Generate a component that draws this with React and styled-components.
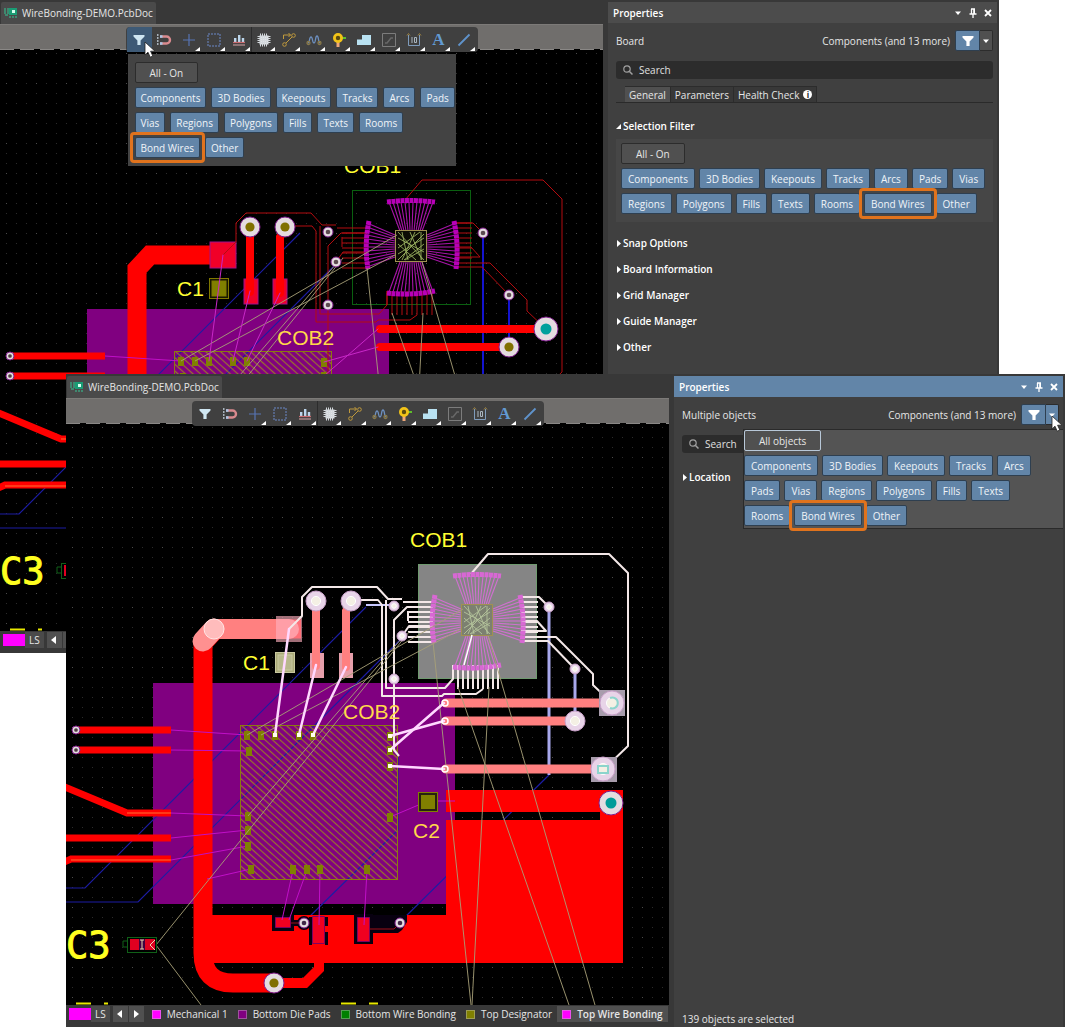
import styled, { createGlobalStyle, css } from 'styled-components';

const BLUE = '#6285a8';

/* ---------- data ---------- */

const toolbarFilters = [
  ['Components', '3D Bodies', 'Keepouts', 'Tracks', 'Arcs', 'Pads'],
  ['Vias', 'Regions', 'Polygons', 'Fills', 'Texts', 'Rooms'],
  ['Bond Wires', 'Other'],
];

const panelFilters = [
  ['Components', '3D Bodies', 'Keepouts', 'Tracks', 'Arcs', 'Pads', 'Vias'],
  ['Regions', 'Polygons', 'Fills', 'Texts', 'Rooms', 'Bond Wires', 'Other'],
];

const objectFilters = [
  ['Components', '3D Bodies', 'Keepouts', 'Tracks', 'Arcs'],
  ['Pads', 'Vias', 'Regions', 'Polygons', 'Fills', 'Texts'],
  ['Rooms', 'Bond Wires', 'Other'],
];

const sections = [
  'Snap Options',
  'Board Information',
  'Grid Manager',
  'Guide Manager',
  'Other',
];

const layers = [
  { name: 'Mechanical 1', color: '#ff00ff' },
  { name: 'Bottom Die Pads', color: '#800080' },
  { name: 'Bottom Wire Bonding', color: '#008000' },
  { name: 'Top Designator', color: '#808000' },
  { name: 'Top Wire Bonding', color: '#ff00ff', active: true },
];

/* ---------- icons ---------- */

const FunnelIcon = ({ color = '#cfe6f2' }) => (
  <svg width="16" height="16" viewBox="0 0 16 16" aria-hidden="true">
    <path d="M2.500 3h11v1.600L9.600 8.600V13H6.400V8.600L2.500 4.600z" fill={color} />
  </svg>
);

const PcbIcon = () => (
  <svg width="14" height="12" viewBox="0 0 14 12" aria-hidden="true">
    <path d="M5 1h8v7H5z" fill="#1a9c74" />
    <path d="M8 3h3v3H8z" fill="#d8fff0" />
    <path
      d="M0 2h2M3 2h2M0 4h2M3 4h2M0 6h2M3 6h2M1 8h3M5 10h2M8 10h2M11 10h2"
      stroke="#35c795"
      strokeWidth="1.2"
    />
  </svg>
);

const tools = [
  { name: 'Selection filter', icon: <FunnelIcon /> },
  {
    name: 'Snapping',
    icon: (
      <svg width="16" height="16" viewBox="0 0 16 16">
        <path d="M4 4.500h6.500a3.500 3.500 0 0 1 0 7H4" fill="none" stroke="#d98a8e" strokeWidth="2.400" />
        <path d="M4 4.500h2.500M4 11.500h2.500" stroke="#a9c6e6" strokeWidth="2.400" />
        <path d="M1 3h1.500M1 6h1.500M1 9h1.500M1 12h1.500" stroke="#c9d6e2" strokeWidth="1.500" />
      </svg>
    ),
  },
  {
    name: 'Place origin',
    menu: true,
    icon: (
      <svg width="16" height="16" viewBox="0 0 16 16">
        <path d="M8 2v12M2 8h12" stroke="#5774b4" strokeWidth="1.200" />
      </svg>
    ),
  },
  {
    name: 'Select area',
    menu: true,
    icon: (
      <svg width="16" height="16" viewBox="0 0 16 16">
        <rect x="2" y="2" width="12" height="12" fill="none" stroke="#6a88c8" strokeDasharray="2 1" />
      </svg>
    ),
  },
  {
    name: 'Align',
    menu: true,
    divider: true,
    icon: (
      <svg width="16" height="16" viewBox="0 0 16 16">
        <path d="M3 6h2.400v5H3zM7 3h2.400v8H7zM10.800 6h2.400v5h-2.400z" fill="#bcd6ec" />
        <path d="M2 10.500h12" stroke="#c96a6e" strokeWidth="1.200" />
        <path d="M2 13h12" stroke="#d8a5a8" />
      </svg>
    ),
  },
  {
    name: 'Place component',
    menu: true,
    icon: (
      <svg width="16" height="16" viewBox="0 0 16 16">
        <path d="M3.500 3.500h9v9h-9z" fill="#dfe3e6" />
        <path
          d="M4.500 1.500v13M6.500 1.500v13M8.500 1.500v13M10.500 1.500v13M1.500 4.500h13M1.500 6.500h13M1.500 8.500h13M1.500 10.500h13"
          stroke="#d3d8dc"
        />
      </svg>
    ),
  },
  {
    name: 'Route track',
    menu: true,
    icon: (
      <svg width="16" height="16" viewBox="0 0 16 16" fill="none" stroke="#c09a3c">
        <path d="M2.500 7V3h7M7.500 1l2 2-2 2M5 11l6-6" />
        <circle cx="3.500" cy="12.500" r="1.800" />
        <circle cx="12.500" cy="3.500" r="1.800" />
      </svg>
    ),
  },
  {
    name: 'Tune length',
    menu: true,
    icon: (
      <svg width="16" height="16" viewBox="0 0 16 16" fill="none" strokeWidth="1.300">
        <path d="M2 11c2 0 1-6 3-6s1 6 3 6 1-7 3-7 1 7 3 7" stroke="#6d90c0" />
        <circle cx="2.500" cy="11" r="1.500" stroke="#8a7a4a" />
        <circle cx="13.500" cy="11" r="1.500" stroke="#8a7a4a" />
      </svg>
    ),
  },
  {
    name: 'Place via',
    menu: true,
    icon: (
      <svg width="16" height="16" viewBox="0 0 16 16">
        <path d="M10 6h5" stroke="#5fbf2a" strokeWidth="2" />
        <path d="M7 9v6" stroke="#f0a878" strokeWidth="3" />
        <circle cx="7" cy="6" r="3.600" fill="#5a4a10" stroke="#f2c318" strokeWidth="2.800" />
      </svg>
    ),
  },
  {
    name: 'Place polygon',
    menu: true,
    icon: (
      <svg width="16" height="16" viewBox="0 0 16 16">
        <path d="M1 13V7.500h5V3h9v10z" fill="#b9e2f2" />
      </svg>
    ),
  },
  {
    name: 'Place keepout',
    menu: true,
    icon: (
      <svg width="16" height="16" viewBox="0 0 16 16" fill="none" stroke="#7c7c7c">
        <path d="M1.500 1.500h13v13h-13z" />
        <path d="M4 11h2l4-5h2" stroke="#686868" strokeWidth="1.500" />
      </svg>
    ),
  },
  {
    name: 'Place dimension',
    menu: true,
    icon: (
      <svg width="16" height="16" viewBox="0 0 16 16" fill="none" stroke="#7f9cbc">
        <path d="M2.500 3v10.500h11V3" />
        <path d="M6 5v6M8.500 5.500h2v5h-2z" stroke="#aab6c0" />
        <path d="M1 3.500l1.500-2 1.500 2M12 3.500l1.500-2 1.500 2" stroke="#9a8040" />
      </svg>
    ),
  },
  { name: 'Place string', menu: true, letter: 'A' },
  {
    name: 'Place line',
    menu: true,
    icon: (
      <svg width="16" height="16" viewBox="0 0 16 16">
        <path d="M2.500 13.500l11-11" stroke="#5f93cc" strokeWidth="1.800" />
      </svg>
    ),
  },
];

const PointerIcon = () => (
  <svg width="12" height="18" viewBox="0 0 12 18" aria-hidden="true">
    <path d="M1 1v13l3-2.800 2.200 5 2.600-1.200-2.200-4.800H11z" fill="#fff" stroke="#222" strokeWidth=".8" />
  </svg>
);

const PinIcon = () => (
  <svg width="10" height="10" viewBox="0 0 10 10" aria-hidden="true">
    <path d="M3 1h4M3.500 1v5M6 1v5M1.500 6h7M5 6v4" stroke="#fff" strokeWidth="1.300" fill="none" />
    <path d="M5.500 1H7v5H5.500z" fill="#fff" />
  </svg>
);

const CloseIcon = () => (
  <svg width="8" height="8" viewBox="0 0 8 8" aria-hidden="true">
    <path d="M1 1l6 6M7 1L1 7" stroke="#fff" strokeWidth="1.800" />
  </svg>
);

const DownIcon = () => (
  <svg width="8" height="8" viewBox="0 0 8 8" aria-hidden="true">
    <path d="M1 2.500h6L4 6z" fill="#fff" />
  </svg>
);

const SearchIcon = () => (
  <svg width="12" height="12" viewBox="0 0 12 12" aria-hidden="true">
    <circle cx="5" cy="5" r="3.200" fill="none" stroke="#a0a0a0" strokeWidth="1.200" />
    <path d="M7.500 7.500l3 3" stroke="#a0a0a0" strokeWidth="1.500" />
  </svg>
);

/* ---------- board drawing ---------- */

const range = (n) => Array.from({ length: n }, (_, i) => i);

const diePads = [
  [247, 735], [261, 735], [275, 735], [299, 735], [313, 735], [249, 751],
  [248, 816], [248, 830], [248, 846], [251, 869], [293, 869], [307, 869],
  [320, 869], [367, 869], [390, 736], [390, 750], [390, 766], [390, 817],
];

const signalTraces = [
  '471,574 488,554 609,554 628,573 628,746 603,770',
  '521,597 539,597 549,607',
  '521,641 548,641 575,669',
  '521,637 556,637 593,674 593,685 612,703',
  '521,621 537,621 546,631 521,631',
  '433,607 407,607 394,620 394,750 399,756',
  '402,636 409,626 433,626',
  '289,629 302,616 302,597 312,587 377,587 388,599 402,599',
  '351,600 378,600 382,605 382,696 442,696 444,694 476,694 483,689',
  '386,600 386,688 445,688 453,679 453,665',
];

const powerTraces = ['M446 703H612', 'M446 721H575', 'M446 769H603'];

const bondWires = [
  'M289 629L275 735', 'M316 665L299 735', 'M346 667L313 735',
  'M444 703L390 750', 'M444 721L390 736', 'M444 769L390 766',
];

const guideLines =
  'M247 735L463 609M261 735L461 629M156 945L409 632M248 816L402 638M156 945L201 1005' +
  'M433 642L471 1005M489 687L472 1005M458 687L569 1005M488 636L595 1005';

const Via = ({ x, y, r = 5, hole = '#807000', selected }) => (
  <g>
    <circle cx={x} cy={y} r={r} fill={selected ? '#e8d4e8' : '#e4dce0'} stroke={selected ? '#c9a0c9' : '#80208c'} />
    <circle cx={x} cy={y} r={r * 0.46} fill={selected ? '#f4f0e4' : hole} stroke={selected ? '#fff' : 'none'} />
  </g>
);

const BondFan = ({ selected }) => {
  const color = selected ? '#d070d0' : '#a814a8';
  const ends = range(12);
  return (
    <g stroke={color} strokeWidth="1.100">
      {ends.map((i) => {
        const t = i - 5.5;
        return (
          <g key={i}>
            <path d={`M${477 + t * 4} 576L${477 + t * 2} 605`} />
            <path d={`M${477 + t * 4} 666L${477 + t * 2} 636`} />
            <path d={`M433 ${619 + t * 4}L461 ${620 + t * 2}`} />
            <path d={`M522 ${619 + t * 4}L493 ${620 + t * 2}`} />
          </g>
        );
      })}
      <g fill="none" stroke={selected ? '#d868d4' : '#b800b8'} strokeWidth="5" strokeDasharray="4 .5">
        <path d="M453 576Q477 573 501 576" />
        <path d="M453 667Q477 670 501 665" />
        <path d="M435 595Q430 619 434 643" />
        <path d="M520 595Q525 619 522 643" />
      </g>
    </g>
  );
};

const Board = ({ selected }) => {
  const id = selected ? 'selected' : 'plain';
  const trace = selected ? '#f4e8e8' : '#b40c10';
  const power = selected ? '#ff8080' : '#ff0000';
  const pad = selected ? 'rgba(255, 176, 190, 0.9)' : '#f00028';
  return (
    <BoardSvg viewBox="66 423 603 582" preserveAspectRatio="xMinYMin slice" role="img" aria-label="PCB layout">
      <defs>
        <pattern id={`dots-${id}`} x="72" y="427" width="30" height="30" patternUnits="userSpaceOnUse">
          <path
            d="M10 0h1M20 0h1M0 10h1M10 10h1M20 10h1M0 20h1M10 20h1M20 20h1"
            transform="translate(0 .5)"
            stroke="#2c2c2c"
          />
          <path d="M0 .500h1" stroke="#4c4c4c" />
        </pattern>
        <pattern id={`hatch-${id}`} width="5" height="5" patternUnits="userSpaceOnUse" patternTransform="rotate(-48)">
          <path d="M2.500 0v5" stroke="#98742a" strokeWidth="1.200" />
        </pattern>
      </defs>
      <rect x="66" y="423" width="603" height="582" fill="#000" />
      <rect x="66" y="423" width="603" height="582" fill={`url(#dots-${id})`} />
      <path d="M66 423.500H669" stroke="#8a8886" strokeDasharray="14 6" />

      <rect x="153" y="683" width="302" height="221" fill="#800080" />

      {/* bottom copper */}
      <g fill="none" stroke="#1c1ca4" strokeWidth="1.200">
        <path d="M66 888H85L366 607M66 902H138L402 638M304 922L398 830V757M400 922L549 775" />
      </g>

      {/* top copper */}
      <path d="M446 790H623V963H203V915H446V820H600V812H446z" fill="#f00" />
      <g fill="none" stroke="#f00">
        <path d="M301 629H216L203 643V953Q203 983 233 983H274" strokeWidth="19" />
        <path d="M274 983H305L319 969V960" strokeWidth="10" />
        <path d="M76 730H171M76 750H171M60 785L127 813H171M60 838H171M60 864L71 859H171" strokeWidth="7" />
      </g>
      <path d="M127 813H171M71 860H171" stroke="#ff7030" />

      {/* clearances around the pads on the lower pour */}
      <g fill="#080010">
        <path d="M272 915H294V920H312V926H294V931H272zM309 917H312V945H309zM325 917H328V926H325zM325 932H328V945H325zM354 914H373V944H354z" />
        <path d="M373 915H407V922L402 930L398 933H373z" />
        <circle cx="304" cy="923" r="7" />
      </g>
      <g fill="#f00020" stroke="#800060">
        <path d="M275.500 917.500h15v10h-15zM357.500 917.500h12v24h-12zM312.500 916.500h12v27h-12z" />
      </g>
      <path d="M370 929H394L400 923M291 923H304" fill="none" stroke="#a01018" />

      <rect x="240.500" y="725.500" width="157" height="154" fill={`url(#hatch-${id})`} stroke="#8a7a10" />
      <path
        d="M171 730L247 735M171 750L249 751M171 813L248 816M171 838L248 830M171 860L248 846M207 879L251 869M293 870L282 920M307 870L289 920M320 870L319 925M367 870L364 925M390 817L428 801M428 801H455"
        stroke="#c010c8"
      />
      {diePads.map(([x, y]) => (
        <rect key={`${x}-${y}`} x={x - 3} y={y - 4} width="6" height="9" fill="#808000" />
      ))}

      {/* surface pads and the traces that feed them */}
      {selected && (
        <g>
          <path d="M214 629H289" stroke="#ff8080" strokeWidth="20" strokeLinecap="round" />
          <path d="M203 641L214 629" stroke="#ff9090" strokeWidth="21" strokeLinecap="round" />
          <circle cx="214" cy="629" r="10" fill="#ffbcbc" stroke="#ffe4e4" />
        </g>
      )}
      <g fill={pad} stroke={selected ? 'none' : '#a0108c'}>
        <rect x="276" y="616" width="26" height="26" fillOpacity={selected ? 0.7 : 1} />
        <rect x="310" y="653" width="14" height="25" />
        <rect x="339" y="653" width="14" height="25" />
      </g>
      <path d="M316 601V666M351 601L346 611V667" fill="none" stroke={power} strokeWidth="8" strokeLinecap="round" />
      <g fill={selected ? '#b8b88c' : '#808000'} stroke={selected ? '#c8c8a0' : '#807800'}>
        <rect x="275.500" y="652.500" width="19" height="20" fill={selected ? '#aaaa78' : '#181800'} />
        <rect x="278" y="655" width="14" height="15" />
      </g>
      <rect x="418.500" y="792.500" width="19" height="19" fill="#282010" stroke="#808000" />
      <rect x="421" y="795" width="14" height="14" fill="#808000" />

      <rect
        x="418.500"
        y="564.500"
        width="118"
        height="114"
        fill={selected ? '#858585' : 'none'}
        stroke={selected ? '#6f9a6f' : '#0a6010'}
      />

      <path
        d="M549 607V775M575 669V721"
        stroke={selected ? '#a8a8ec' : '#1414d0'}
        strokeWidth={selected ? 3 : 2}
      />
      {selected && <path d="M366 605H394" stroke="#c8c8ff" strokeWidth="2" />}

      <g fill="none" stroke={trace} strokeWidth={selected ? 2 : 1} strokeLinejoin="round">
        {signalTraces.map((points) => (
          <polyline key={points} points={points} />
        ))}
        {range(8).map((i) => (
          <path key={i} d={`M408 ${607 + i * 5}H433M521 ${597 + i * 5}H538`} />
        ))}
        {range(10).map((i) => (
          <path key={i} d={`M${453 + i * 5} 665V${i ? 689 : 679}`} />
        ))}
        <path d="M408 611V621M403 602H433" />
      </g>

      <BondFan selected={selected} />
      <rect x="461.500" y="604.500" width="31" height="31" fill={selected ? '#7c8070' : '#0c0c04'} stroke="#a09050" />
      <path
        d="M464 606L490 634M464 634L490 608M468 606L474 634M481 606L468 634M486 606L464 622M490 618L470 634M464 612L490 626M476 606L488 634M464 628L490 612M464 618L482 634M487 606L487 634M471 634L490 623"
        stroke={selected ? '#b4c49c' : '#98b060'}
        strokeWidth=".9"
      />
      {selected && <path d="M472 635L464 665" stroke="#fff" strokeWidth="1.500" />}

      <g fill="none" stroke={power} strokeWidth={selected ? 9 : 8} strokeLinecap="round">
        {powerTraces.map((d) => (
          <path key={d} d={d} />
        ))}
      </g>

      {/* unconnected net guides */}
      <path d={guideLines} fill="none" stroke="#a8a078" strokeWidth=".9" />

      <g stroke={selected ? '#ffd8ff' : '#c828c8'} strokeWidth={selected ? 2.5 : 1} strokeLinecap="round">
        {bondWires.map((d) => (
          <path key={d} d={d} />
        ))}
      </g>
      {selected && (
        <g>
          <g fill="none" stroke="#fff" strokeWidth="1.500">
            <circle cx="445" cy="703" r="3" />
            <circle cx="445" cy="721" r="3" />
            <circle cx="445" cy="769" r="3" />
          </g>
          <path
            d="M273 733h4v4h-4zM297 733h4v4h-4zM311 733h4v4h-4zM388 734h4v4h-4zM388 748h4v4h-4zM388 764h4v4h-4z"
            fill="#fffff0"
          />
          <path d="M599 690h26v26h-26zM591 757h26v25h-26z" fill="#a89cac" />
        </g>
      )}

      {[[394, 606], [402, 636], [394, 679], [549, 607], [575, 669]].map(([x, y]) => (
        <Via key={`${x}-${y}`} x={x} y={y} selected={selected} hole="#5c4a50" />
      ))}
      <Via x={76} y={730} r={4} hole="#504040" />
      <Via x={76} y={750} r={4} hole="#504040" />
      <Via x={304} y={923} hole="#402848" />
      <Via x={400} y={923} hole="#402848" />
      <Via x={316} y={601} r={10} selected={selected} />
      <Via x={351} y={601} r={10} selected={selected} />
      <Via x={575} y={721} r={10} selected={selected} />
      <Via x={274} y={983} r={10} />
      <Via x={612} y={703} r={12} hole="#00a09c" selected={selected} />
      <Via x={603} y={769} r={12} hole="#00a09c" selected={selected} />
      <Via x={611} y={803} r={12} hole="#009c98" />
      {selected && (
        <path d="M610 698a5.500 5.500 0 1 1 0 10M598 766h10v7h-10z" fill="none" stroke="#8cd4cc" strokeWidth="2" />
      )}

      {/* C3 footprint */}
      <rect x="127.500" y="937.500" width="29" height="15" fill="none" stroke="#106018" />
      <rect x="130" y="939" width="25" height="11" fill="#e00020" />
      <path d="M139 939h6v11h-6z" fill="#400040" />
      <path d="M140 940h4M142 940v9M140 949h4M155 940l-5 5 5 5" fill="none" stroke="#e8d8b0" />
      <path d="M127 941h-4v6h4" fill="none" stroke="#106018" />

      <Designator x="410" y="547">COB1</Designator>
      <Designator x="343" y="719" $over>COB2</Designator>
      <Designator x="243" y="670">C1</Designator>
      <Designator x="413" y="838" $over>C2</Designator>
      <StrokeDesignator x="66" y="958">C3</StrokeDesignator>
      <path d="M76 1003.500h15M104 1003.500h4M341 1003.500h15M369 1003.500h9" stroke="#e8e800" strokeWidth="2" />
    </BoardSvg>
  );
};

/* ---------- pieces ---------- */

const FilterRows = ({ rows, compact }) =>
  rows.map((row) => (
    <ChipRow key={row[0]} $compact={compact}>
      {row.map((label) => (
        <Chip key={label} type="button" $compact={compact} $marked={label === 'Bond Wires'}>
          {label}
        </Chip>
      ))}
    </ChipRow>
  ));

const Editor = ({ selected, menuOpen }) => (
  <EditorPane>
    <DocumentTabs>
      <DocumentTab type="button">
        <PcbIcon />
        WireBonding-DEMO.PcbDoc
      </DocumentTab>
    </DocumentTabs>
    <ToolStrip>
      <Toolbar>
        {tools.map((tool, i) => (
          <ToolButton
            key={tool.name}
            type="button"
            aria-label={tool.name}
            $menu={tool.menu}
            $divider={tool.divider}
            $active={menuOpen && i === 0}
          >
            {tool.letter ? <ToolLetter>{tool.letter}</ToolLetter> : tool.icon}
          </ToolButton>
        ))}
        {menuOpen && (
          <>
            <ToolbarMenu>
              <AllButton type="button">All - On</AllButton>
              <FilterRows rows={toolbarFilters} compact />
            </ToolbarMenu>
            <ToolbarPointer>
              <PointerIcon />
            </ToolbarPointer>
          </>
        )}
      </Toolbar>
    </ToolStrip>
    <Canvas>
      <Board selected={selected} />
    </Canvas>
    <LayerBar>
      <LayerSet type="button">
        <SetColor />
        <span>LS</span>
      </LayerSet>
      <LayerNav>
        <button type="button" aria-label="Previous layers">
          <svg width="6" height="8" viewBox="0 0 6 8">
            <path d="M5 0v8L0 4z" fill="#fff" />
          </svg>
        </button>
        <button type="button" aria-label="Next layers">
          <svg width="6" height="8" viewBox="0 0 6 8">
            <path d="M1 0v8l5-4z" fill="#fff" />
          </svg>
        </button>
      </LayerNav>
      {/* the bar under the other window has no room left for its tabs */}
      {selected &&
        layers.map((layer) => (
          <LayerTab key={layer.name} type="button" $active={layer.active}>
            <Swatch $color={layer.color} />
            {layer.name}
          </LayerTab>
        ))}
    </LayerBar>
  </EditorPane>
);

const PanelHeader = ({ focused }) => (
  <PanelTitle $focused={focused}>
    <h2>Properties</h2>
    <button type="button" aria-label="Panel menu"><DownIcon /></button>
    <button type="button" aria-label="Pin panel"><PinIcon /></button>
    <button type="button" aria-label="Close panel"><CloseIcon /></button>
  </PanelTitle>
);

const ObjectHeader = ({ title, open, children }) => (
  <ObjectRow>
    <p>{title}</p>
    <span>Components (and 13 more)</span>
    <FilterButton type="button" aria-label="Filter objects">
      <FunnelIcon color="#fff" />
    </FilterButton>
    <FilterArrow type="button" aria-label="Choose object types" $open={open}>
      <DownIcon />
    </FilterArrow>
    {children}
  </ObjectRow>
);

const SearchBox = () => (
  <SearchField>
    <SearchIcon />
    <input type="text" placeholder="Search" aria-label="Search" />
  </SearchField>
);

const SectionHeader = ({ title, open }) => (
  <SectionButton type="button">
    <svg width="5" height="7" viewBox="0 0 5 7" aria-hidden="true">
      <path d={open ? 'M5 1v5H0z' : 'M1 0v7l4-3.500z'} fill="#fff" />
    </svg>
    {title}
  </SectionButton>
);

const BoardWindow = () => (
  <BackWindow>
    <Editor menuOpen />
    <Panel>
      <PanelHeader />
      <PanelBody>
        <ObjectHeader title="Board" />
        <SearchBox />
        <TabRow>
          <PanelTab type="button" $active>General</PanelTab>
          <PanelTab type="button">Parameters</PanelTab>
          <PanelTab type="button">
            Health Check <InfoBadge>i</InfoBadge>
          </PanelTab>
        </TabRow>
        <SectionHeader title="Selection Filter" open />
        <FilterGroup>
          <AllButton type="button">All - On</AllButton>
          <FilterRows rows={panelFilters} />
        </FilterGroup>
        <SectionList>
          {sections.map((section) => (
            <SectionHeader key={section} title={section} />
          ))}
        </SectionList>
      </PanelBody>
    </Panel>
  </BackWindow>
);

const SelectionWindow = () => (
  <FrontWindow>
    <Editor selected />
    <Panel>
      <PanelHeader focused />
      <PanelBody>
        <ObjectHeader title="Multiple objects" open>
          <ObjectMenu>
            <AllButton type="button" $outlined>All objects</AllButton>
            <FilterRows rows={objectFilters} />
          </ObjectMenu>
          <PanelPointer>
            <PointerIcon />
          </PanelPointer>
        </ObjectHeader>
        <SearchBox />
        <LocationSection>
          <SectionHeader title="Location" />
        </LocationSection>
        <StatusText>139 objects are selected</StatusText>
      </PanelBody>
    </Panel>
  </FrontWindow>
);

const App = () => (
  <>
    <GlobalStyle />
    <Desktop>
      <BoardWindow />
      <SelectionWindow />
    </Desktop>
  </>
);

/* ---------- styles ---------- */

const GlobalStyle = createGlobalStyle`
  *, *::before, *::after {
    box-sizing: border-box;
  }

  body {
    margin: 0;
    background: #fff;
  }

  body, button, input {
    font-family: 'Open Sans', 'Noto Sans', sans-serif;
    font-size: 10px;
    line-height: 14px;
    color: #e6e6e6;
  }

  button {
    margin: 0;
    padding: 0;
    border: 0;
    background: none;
    white-space: nowrap;
  }

  h2, p {
    margin: 0;
    font-size: 10px;
  }

  svg {
    display: block;
    flex: none;
  }
`;

/* the two windows overlap in the middle cell */
const Desktop = styled.main`
  display: grid;
  grid-template-columns: 66px minmax(0, 1fr) 66px;
  grid-template-rows: 374px 279px minmax(374px, 1fr);
  min-height: 100vh;
  padding-right: 15px;
`;

const Window = styled.section`
  display: flex;
  gap: 5px;
  min-width: 0;
  min-height: 0;
  padding-right: 2px;
  background: #383838;
  isolation: isolate;
`;

const BackWindow = styled(Window)`
  grid-area: 1 / 1 / 3 / 3;
`;

const FrontWindow = styled(Window)`
  grid-area: 2 / 2 / 4 / 4;
`;

const EditorPane = styled.div`
  flex: 1;
  display: flex;
  flex-direction: column;
  min-width: 0;
`;

const DocumentTabs = styled.div`
  display: flex;
  height: 24px;
  padding: 2px 0 0 1px;
`;

const DocumentTab = styled.button`
  display: flex;
  align-items: center;
  gap: 4px;
  padding: 0 3px;
  border-radius: 2px 2px 0 0;
  background: #4a4a4a;
`;

const ToolStrip = styled.div`
  position: relative;
  z-index: 2;
  display: flex;
  justify-content: center;
  align-items: flex-start;
  height: 25px;
  padding-top: 2px;
  border-top: 1px solid #7c7a78;
  background: #706e6c;
`;

const Toolbar = styled.div`
  position: relative;
  display: flex;
  height: 25px;
  padding: 0 1px;
  border-radius: 4px;
  background: #404040;
`;

const ToolButton = styled.button`
  position: relative;
  display: grid;
  place-items: center;
  width: 25px;
  height: 25px;
  border-radius: 3px 0 0 0;
  border-right: 1px solid ${({ $divider }) => ($divider ? '#2c2c2c' : 'transparent')};
  background: ${({ $active }) => ($active ? '#3e5a76' : 'transparent')};

  ${({ $menu }) =>
    $menu &&
    css`
      &::after {
        content: '';
        position: absolute;
        right: 1px;
        bottom: 1px;
        border-left: 5px solid transparent;
        border-bottom: 4px solid #fff;
      }
    `}
`;

const ToolLetter = styled.span`
  font: bold 17px/18px 'Liberation Serif', serif;
  color: #629ad2;
`;

const ToolbarMenu = styled.div`
  position: absolute;
  top: 27px;
  left: 2px;
  display: flex;
  flex-direction: column;
  align-items: flex-start;
  gap: 4px;
  width: 328px;
  padding: 8px 7px;
  background: #434343;
`;

const ToolbarPointer = styled.span`
  position: absolute;
  top: 14px;
  left: 18px;
`;

const ChipRow = styled.div`
  display: flex;
  gap: ${({ $compact }) => ($compact ? 5 : 4)}px;
`;

const Chip = styled.button`
  position: relative;
  height: 21px;
  padding: 0 ${({ $compact }) => ($compact ? 5 : 6)}px;
  border: 1px solid #2e3f50;
  border-radius: 2px;
  background: ${BLUE};
  color: #f0f4f8;

  ${({ $marked }) =>
    $marked &&
    css`
      z-index: 1;

      &::after {
        content: '';
        position: absolute;
        inset: -6px;
        border: 3px solid #e0731d;
        border-radius: 4px;
      }
    `}
`;

const AllButton = styled.button`
  height: 21px;
  padding: 0 14px;
  border: 1px solid ${({ $outlined }) => ($outlined ? '#b8c8d8' : '#2c2c2c')};
  border-radius: 2px;
  background: #505050;
`;

const Canvas = styled.div`
  flex: 1;
  min-height: 0;
  overflow: hidden;
  background: #000;
`;

const BoardSvg = styled.svg`
  width: 100%;
  height: 100%;
`;

const Designator = styled.text`
  font: 21px 'Liberation Sans', sans-serif;
  fill: ${({ $over }) => ($over ? '#ffd84a' : '#ffff32')};
`;

const StrokeDesignator = styled.text`
  font: 37px 'DejaVu Sans Mono', monospace;
  fill: #ffff20;
  stroke: #ffff20;
`;

const LayerBar = styled.div`
  display: flex;
  align-items: flex-start;
  height: 22px;
  padding: 1px 3px 0;
`;

const LayerSet = styled.button`
  display: flex;
  align-items: center;
  height: 16px;

  span {
    padding: 1px 4px;
    background: #4a4a4a;
  }
`;

const SetColor = styled.i`
  width: 22px;
  height: 12px;
  background: #ff00ff;
`;

const LayerNav = styled.div`
  display: flex;
  gap: 1px;
  margin: 0 3px;

  button {
    display: grid;
    place-items: center;
    width: 15px;
    height: 16px;
    background: #505050;
  }
`;

const LayerTab = styled.button`
  display: flex;
  align-items: center;
  gap: 6px;
  height: 16px;
  padding: 0 5px;
  background: ${({ $active }) => ($active ? '#505050' : 'transparent')};
  font-weight: ${({ $active }) => ($active ? 600 : 400)};
`;

const Swatch = styled.i`
  width: 9px;
  height: 9px;
  border: 1px solid;
  border-color: color-mix(in srgb, ${({ $color }) => $color} 60%, #ccc);
  background: ${({ $color }) => $color};
`;

const Panel = styled.aside`
  display: flex;
  flex-direction: column;
  flex: none;
  width: 389px;
  padding-top: 2px;
`;

const PanelTitle = styled.header`
  display: flex;
  align-items: center;
  gap: 5px;
  height: 21px;
  padding: 0 4px 0 5px;
  background: ${({ $focused }) => ($focused ? BLUE : '#4c4c4c')};

  h2 {
    flex: 1;
    color: #fff;
    font-weight: 600;
  }

  button {
    display: grid;
    place-items: center;
    width: 10px;
    height: 10px;
  }
`;

const PanelBody = styled.div`
  flex: 1;
  display: flex;
  flex-direction: column;
  padding: 0 4px 1px 8px;
  background: #404040;
`;

const ObjectRow = styled.div`
  position: relative;
  z-index: 1;
  display: flex;
  align-items: center;
  height: 35px;
  margin-bottom: 3px;

  p {
    flex: 1;
  }
`;

const FilterButton = styled.button`
  display: grid;
  place-items: center;
  width: 25px;
  height: 21px;
  margin-left: 5px;
  border: 1px solid #2e3f50;
  border-radius: 2px 0 0 2px;
  background: ${BLUE};
`;

const FilterArrow = styled.button`
  display: grid;
  place-items: center;
  width: 13px;
  height: 21px;
  border: 1px solid #2c2c2c;
  border-left: 0;
  border-radius: 0 2px 2px 0;
  background: ${({ $open }) => ($open ? BLUE : '#505050')};
`;

const ObjectMenu = styled.div`
  position: absolute;
  top: 32px;
  right: -4px;
  display: flex;
  flex-direction: column;
  align-items: flex-start;
  gap: 4px;
  width: 320px;
  padding: 0 0 2px;
  border: 1px solid #2a2a2a;
  border-right: 0;
  background: #545454;
`;

const PanelPointer = styled.span`
  position: absolute;
  top: 18px;
  right: -4px;
`;

const SearchField = styled.div`
  display: flex;
  align-items: center;
  gap: 5px;
  height: 18px;
  padding: 0 6px;
  border-radius: 3px;
  background: #2c2c2c;

  input {
    flex: 1;
    min-width: 0;
    padding: 0;
    border: 0;
    outline: 0;
    background: none;
  }

  input::placeholder {
    color: #e0e0e0;
    opacity: 1;
  }
`;

const TabRow = styled.div`
  display: flex;
  margin-top: 7px;
  margin-bottom: 10px;
  padding-left: 9px;
  border-bottom: 1px solid #2a2a2a;
`;

const PanelTab = styled.button`
  display: flex;
  align-items: center;
  gap: 4px;
  height: 16px;
  padding: 0 4px;
  border: 1px solid #2c2c2c;
  border-width: 1px 1px 0 0;
  background: ${({ $active }) => ($active ? '#505050' : '#383838')};
`;

const InfoBadge = styled.span`
  width: 9px;
  height: 9px;
  border-radius: 50%;
  background: #fff;
  color: #222;
  font-size: 8px;
  font-weight: bold;
  line-height: 9px;
  text-align: center;
`;

const SectionButton = styled.button`
  display: flex;
  align-items: center;
  gap: 2px;
  height: 26px;
  color: #fff;
  font-weight: 600;
`;

const FilterGroup = styled.div`
  display: flex;
  flex-direction: column;
  align-items: flex-start;
  gap: 4px;
  padding: 4px 5px 8px;
  background: #464646;
`;

const SectionList = styled.div`
  margin-top: 8px;
`;

const LocationSection = styled.div`
  margin-top: 11px;
`;

const StatusText = styled.p`
  margin-top: auto;
`;

export default App;
